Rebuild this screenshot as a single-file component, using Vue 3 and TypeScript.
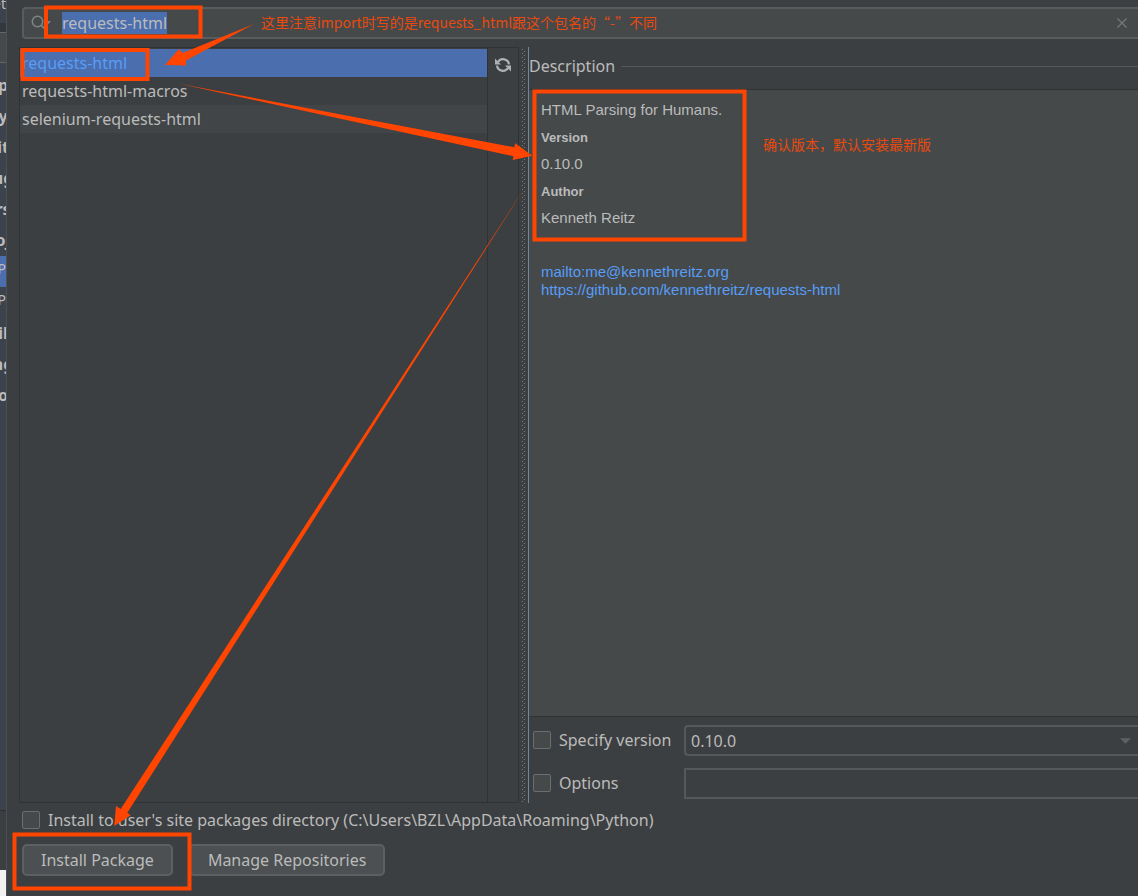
<script setup lang="ts">
import { onMounted, ref } from 'vue'

interface Pkg {
  name: string
}

const packages: Pkg[] = [
  { name: 'requests-html' },
  { name: 'requests-html-macros' },
  { name: 'selenium-requests-html' },
]
const settings = ['p', 'y', 'it', 'ug', 'rs', 'oj', 'P', 'P', 'il', 'ng', 'o']

const query = ref('requests-html')
const selected = ref(0)
const version = ref('0.10.0')
const searchBox = ref<HTMLInputElement | null>(null)

onMounted(() => {
  searchBox.value?.focus()
  searchBox.value?.select()
})
</script>

<template>
  <div class="screen">
    <aside class="behind">
      <div class="behind-top">et</div>
      <div class="behind-search"></div>
      <ul class="behind-list">
        <li v-for="(s, i) in settings" :key="i" :class="{ sub: s === 'P', current: i === 6 }">{{ s }}</li>
      </ul>
      <div class="behind-foot"></div>
      <div class="behind-page"></div>
    </aside>

    <main class="dialog">
      <div class="search">
        <svg class="lens" viewBox="0 0 22 20" aria-hidden="true">
          <circle cx="6.500" cy="8.500" r="5.200" fill="none" stroke="#7f8486" stroke-width="1.500" />
          <path d="M10.300 12.300l4 4" stroke="#7f8486" stroke-width="1.800" />
          <path d="M13 8h7l-3.500 4z" fill="#7f8486" />
        </svg>
        <input ref="searchBox" v-model="query" type="text" aria-label="Search packages" spellcheck="false" />
        <button class="clear" type="button" aria-label="Clear" @click="query = ''">
          <svg viewBox="0 0 10 10"><path d="M.5 .5l9 9M9.500 .5l-9 9" stroke="#73787a" stroke-width="1.300" /></svg>
        </button>
      </div>

      <div class="content">
        <section class="list-pane">
          <ul class="packages">
            <li v-for="(p, i) in packages" :key="p.name">
              <button type="button" :class="{ on: selected === i }" @click="selected = i">{{ p.name }}</button>
            </li>
          </ul>
          <div class="tools">
            <button class="reload" type="button" aria-label="Reload list of packages">
              <svg viewBox="0 0 16 16">
                <path d="M3 5A6 6 0 0 1 14 7.300M13 11A6 6 0 0 1 2 8.700" fill="none" stroke="#afb1b3" stroke-width="2.300" />
                <path d="M0 1.500v6h6zM16 14.500v-6h-6z" fill="#afb1b3" />
              </svg>
            </button>
          </div>
        </section>

        <div class="splitter"></div>

        <section class="details">
          <h2><span>Description</span></h2>
          <div class="info">
            <p>HTML Parsing for Humans.</p>
            <h4>Version</h4>
            <p>0.10.0</p>
            <h4>Author</h4>
            <p>Kenneth Reitz</p>
            <div class="links">
              <a href="mailto:me@kennethreitz.org">mailto:me@kennethreitz.org</a>
              <a href="https://github.com/kennethreitz/requests-html">https://github.com/kennethreitz/requests-html</a>
            </div>
          </div>
          <div class="options">
            <label class="check"><input type="checkbox" />Specify version</label>
            <div class="combo">
              <select v-model="version" aria-label="Version"><option>0.10.0</option></select>
              <svg viewBox="0 0 12 6" aria-hidden="true"><path d="M0 0h12L6 6z" fill="#5e6162" /></svg>
            </div>
            <label class="check"><input type="checkbox" />Options</label>
            <input class="field" type="text" aria-label="Options" />
          </div>
        </section>
      </div>

      <footer>
        <label class="check"><input type="checkbox" />Install to user's site packages directory (C:\Users\BZL\AppData\Roaming\Python)</label>
        <div class="buttons">
          <button type="button">Install Package</button>
          <button type="button">Manage Repositories</button>
        </div>
      </footer>
    </main>

    <svg class="marks" width="1138" height="896" viewBox="0 0 1138 896" aria-hidden="true">
      <g fill="none" stroke="#ff4500" stroke-width="4">
        <rect x="46" y="7.500" width="154.500" height="29" />
        <rect x="22.500" y="50" width="125" height="29" />
        <rect x="534.500" y="91.500" width="210" height="148" />
        <rect x="14.500" y="834.500" width="175" height="54" />
      </g>
      <g fill="#ff4500">
        <path d="M254 24L186 60.500V65.500L165 65L179 49L182.500 53z" />
        <path d="M178 83.500L514.300 147.300L515.300 143.300L532.300 155.700L512.700 160L513.500 156.300z" />
        <path d="M524 189L127.300 812.700L130.700 815.300L114.300 826L116 806L120.700 809z" />
      </g>
    </svg>
    <span class="note note-import">这里注意import时写的是requests_html跟这个包名的“-”不同</span>
    <span class="note note-version">确认版本，默认安装最新版</span>
  </div>
</template>

<style>
html,
body {
  background: #3c3f41;
  overflow: hidden;
}
</style>

<style scoped>
* {
  box-sizing: border-box;
}
.screen {
  position: relative;
  display: flex;
  height: 100vh;
  color: #bbbbbb;
  background: #3c3f41;
  font: 16px/28px "Noto Sans", "Noto Sans CJK SC", sans-serif;
}
ul,
h2,
h4,
p {
  margin: 0;
  padding: 0;
  list-style: none;
}
button,
input,
select {
  font: inherit;
  color: inherit;
  margin: 0;
  padding: 0;
  border: 0;
  outline: 0;
  background: none;
}
.behind {
  display: flex;
  flex-direction: column;
  width: 7px;
  flex: none;
  overflow: hidden;
  background: #3d434c;
  border-right: 1px solid #4c5052;
}
.behind-top {
  height: 32px;
  font-size: 14px;
  line-height: 8px;
  border-bottom: 9px solid #33373e;
  display: flex;
  justify-content: flex-end;
}
.behind-search {
  height: 31px;
  background: #45494a;
  border: 1px solid #646464;
  border-width: 1px 0;
}
.behind-list {
  flex: 1;
  padding-top: 7px;
  font-weight: 700;
  line-height: 31px;
}
.behind-list li {
  display: flex;
  justify-content: center;
  height: 31px;
}
.behind-list .sub {
  font-size: 14px;
  line-height: 26px;
  font-weight: 400;
  justify-content: flex-end;
}
.behind-list .current {
  background: #4b6eaf;
}
.behind-foot {
  height: 60px;
  background: #3c3f41;
  border-top: 1px solid #2d2f31;
}
.behind-page {
  height: 26px;
  background: #f2f2f2;
}
.dialog {
  display: flex;
  flex: 1;
  min-width: 0;
  flex-direction: column;
  padding-top: 7px;
}
.search {
  display: flex;
  align-items: center;
  height: 32px;
  margin-left: 15px;
  padding: 0 11px 0 7px;
  background: #45494a;
  border: 2px solid #595c5d;
  border-right: 0;
  border-radius: 4px 0 0 4px;
}
.lens {
  width: 22px;
  height: 20px;
}
.search input {
  flex: 1;
  min-width: 0;
  margin-left: 9px;
  height: 22px;
  line-height: 22px;
}
.search input::selection {
  color: #bbbbbb;
  background: #4b6eaf;
}
.clear {
  display: flex;
  width: 10px;
  height: 10px;
}
.content {
  display: flex;
  flex: 1;
  min-height: 0;
  margin-top: 8px;
}
.list-pane {
  display: flex;
  width: 500px;
  margin-left: 12px;
  border: 1px solid #323232;
}
.packages {
  flex: 1;
  padding-top: 1px;
  border-right: 1px solid #323232;
}
.packages button {
  display: block;
  width: 100%;
  height: 28px;
  padding-left: 2px;
  text-align: left;
}
.packages li:nth-child(odd) {
  background: #414547;
}
.packages .on {
  color: #589df6;
  background: #4b6eaf;
}
.tools {
  width: 30px;
  padding: 9px 0 0 7px;
}
.reload {
  display: block;
  width: 16px;
  height: 16px;
}
.reload svg,
.clear svg {
  display: block;
  width: 100%;
  height: 100%;
}
.splitter {
  width: 10px;
  border-right: 1px solid #73859a;
  background: repeating-linear-gradient(#777b7d 0 1px, transparent 1px 4px) 3px 2px / 1px 100% no-repeat,
    repeating-linear-gradient(transparent 0 2px, #777b7d 2px 3px, transparent 3px 4px) 5px 2px / 1px 100% no-repeat;
}
.details {
  display: flex;
  flex: 1;
  min-width: 0;
  flex-direction: column;
}
h2 {
  display: flex;
  align-items: center;
  gap: 6px;
  height: 42px;
  padding-bottom: 4px;
  font-size: 16px;
  font-weight: 400;
}
h2::after {
  content: "";
  flex: 1;
  height: 1px;
  background: #555758;
}
.info {
  flex: 1;
  padding: 6px 12px;
  background: #45494a;
  border: 1px solid #323232;
  border-width: 1px 0;
  font: 15px/27px "Liberation Sans", Arial, sans-serif;
}
.info h4 {
  padding-top: 2px;
  font-size: 13px;
  line-height: 25px;
  font-weight: 700;
}
.links {
  display: flex;
  flex-direction: column;
  align-items: flex-start;
  margin-top: 32px;
  line-height: 18px;
}
.links a {
  color: #589df6;
  text-decoration: none;
}
.options {
  display: grid;
  grid-template-columns: 151px 1fr;
  row-gap: 12px;
  padding: 8px 0 4px 4px;
  align-items: center;
}
.check {
  display: flex;
  align-items: center;
  gap: 8px;
  white-space: nowrap;
}
.options .check {
  padding-bottom: 2px;
}
.check input {
  appearance: none;
  width: 18px;
  height: 18px;
  background: #45494a;
  border: 1px solid #6b6e70;
  border-radius: 2px;
}
.combo {
  display: flex;
  align-items: center;
  height: 31px;
  padding-right: 7px;
  border: 2px solid #55585a;
  border-right: 0;
  border-radius: 4px 0 0 4px;
}
.combo select {
  appearance: none;
  flex: 1;
  padding-left: 5px;
}
.combo svg {
  width: 11px;
  height: 6px;
}
.field {
  width: 100%;
  height: 31px;
  border: 2px solid #55585a;
  border-right: 0;
}
footer {
  height: 93px;
  padding-left: 15px;
}
footer .check {
  height: 34px;
  width: fit-content;
}
.buttons {
  display: flex;
  gap: 16px;
  margin-top: 7px;
}
.buttons button {
  height: 32px;
  padding: 0 17px;
  line-height: 26px;
  background: #4c5052;
  border: 2px solid #5c6061;
  border-radius: 5px;
}
.marks {
  position: absolute;
  left: 0;
  top: 0;
  pointer-events: none;
}
.note {
  position: absolute;
  color: #e8490f;
  font: 14px/20px "Noto Sans CJK SC", sans-serif;
  white-space: nowrap;
}
.note-import {
  left: 261px;
  top: 12px;
}
.note-version {
  left: 763px;
  top: 134px;
}
</style>
